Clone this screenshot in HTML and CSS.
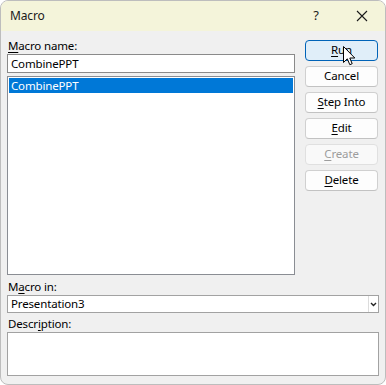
FILE: index.html
```html
<!DOCTYPE html>
<html>
<head>
<meta charset="utf-8">
<link rel="stylesheet" href="styles.css">
</head>
<body>
<div class="window">
  <div class="titlebar">
    <span class="title">Macro</span>
    <div class="controls">
      <span class="help">?</span>
      <span class="close"><svg width="12" height="12" viewBox="0 0 12 12"><path d="M1 1 L11 11 M11 1 L1 11" stroke="#1a1a1a" stroke-width="1.1" fill="none"/></svg></span>
    </div>
  </div>
  <div class="body">
    <div class="top">
      <div class="left">
        <div class="label"><u>M</u>acro name:</div>
        <div class="input">CombinePPT</div>
        <div class="list">
          <div class="item sel">CombinePPT</div>
        </div>
      </div>
      <div class="buttons">
        <div class="btn default"><u>R</u>un
          <svg class="cursor" width="13" height="20" viewBox="0 0 13 20"><path d="M0.5 0.5 L0.5 16.5 L4.3 12.8 L6.8 18.7 L9.2 17.7 L6.8 12 L11.8 12 Z" fill="#fff" stroke="#000" stroke-width="1" stroke-linejoin="miter"/></svg>
        </div>
        <div class="btn">Cancel</div>
        <div class="btn"><u>S</u>tep Into</div>
        <div class="btn"><u>E</u>dit</div>
        <div class="btn disabled"><u>C</u>reate</div>
        <div class="btn"><u>D</u>elete</div>
      </div>
    </div>
    <div class="bottom">
      <div class="label lbl-in">M<u>a</u>cro in:</div>
      <div class="combo">
        <span class="combo-text">Presentation3</span>
        <span class="combo-btn"><svg width="7" height="5" viewBox="0 0 7 5"><path d="M1 1 L3.5 3.5 L6 1" stroke="#222" stroke-width="1.4" fill="none"/></svg></span>
      </div>
      <div class="label lbl-desc">Descr<u>i</u>ption:</div>
      <div class="desc"></div>
    </div>
  </div>
</div>
</body>
</html>
```
FILE: styles.css
```css
html, body {
  margin: 0;
  padding: 0;
  background: #ffffff;
}
body {
  font-family: "Noto Sans", "Open Sans", sans-serif;
  font-size: 11.5px;
  letter-spacing: -0.15px;
  color: #000;
}
u {
  text-decoration-thickness: 1px;
  text-underline-offset: 2px;
}
.window {
  width: 386px;
  height: 385px;
  box-sizing: border-box;
  border: 1px solid #bdbdbd;
  border-radius: 8px;
  background: #f0f0f0;
  overflow: hidden;
  display: flex;
  flex-direction: column;
}
.titlebar {
  height: 30px;
  flex: none;
  background: #f4f4da;
  display: flex;
  align-items: center;
  justify-content: space-between;
}
.title {
  padding-left: 9px;
  font-size: 12px;
  color: #1a1a1a;
  padding-bottom: 2px;
}
.controls {
  display: flex;
  align-items: center;
  height: 100%;
}
.help {
  font-size: 13px;
  width: 46px;
  text-align: center;
  color: #1a1a1a;
  padding-bottom: 2px;
}
.close {
  width: 46px;
  display: flex;
  justify-content: center;
  padding-right: 0;
}
.body {
  flex: 1;
  padding: 0 6px 0 6px;
  display: flex;
  flex-direction: column;
}
.top {
  display: flex;
  gap: 10px;
}
.left {
  width: 288px;
  display: flex;
  flex-direction: column;
}
.label {
  line-height: 16px;
  height: 16px;
  white-space: nowrap;
}
.left .label {
  margin-top: 7px;
  margin-bottom: 0;
  padding-left: 1px;
}
.input {
  height: 19px;
  box-sizing: border-box;
  border: 1px solid #8a8a8a;
  background: #fff;
  padding-left: 3px;
  line-height: 17px;
}
.list {
  margin-top: 3px;
  height: 199px;
  box-sizing: border-box;
  border: 1px solid #8a8d93;
  background: #fff;
  padding: 1px;
}
.item {
  height: 15px;
  line-height: 15px;
  padding-left: 2px;
}
.item.sel {
  background: #0078d7;
  color: #fff;
}
.buttons {
  width: 73px;
  margin-top: 9px;
  display: flex;
  flex-direction: column;
  gap: 5px;
}
.btn {
  position: relative;
  height: 21px;
  box-sizing: border-box;
  border: 1px solid #d0d0d0;
  border-bottom-color: #c2c2c2;
  border-radius: 4px;
  background: #fdfdfd;
  text-align: center;
  line-height: 18px;
  color: #000;
}
.btn.default {
  border: 1px solid #0063b8;
  background: #e0eef9;
}
.btn.disabled {
  color: #9d9d9d;
  border-color: #e0e0e0;
  background: #f9f9f9;
}
.cursor {
  position: absolute;
  left: 37px;
  top: 5px;
}
.bottom {
  display: flex;
  flex-direction: column;
  width: 372px;
}
.bottom .label {
  padding-left: 1px;
}
.lbl-in {
  margin-top: 4px;
}
.combo {
  height: 18px;
  box-sizing: border-box;
  border: 1px solid #a2a2a2;
  background: #fff;
  display: flex;
  align-items: center;
}
.combo-text {
  flex: 1;
  padding-left: 3px;
  line-height: 16px;
}
.combo-btn {
  width: 9px;
  height: 16px;
  border-left: 1px solid #dcdcdc;
  display: flex;
  align-items: center;
  justify-content: center;
  background: #fff;
}
.lbl-desc {
  margin-top: 3px;
}
.desc {
  height: 44px;
  box-sizing: border-box;
  border: 1px solid #a2a2a2;
  background: #fff;
}
```
